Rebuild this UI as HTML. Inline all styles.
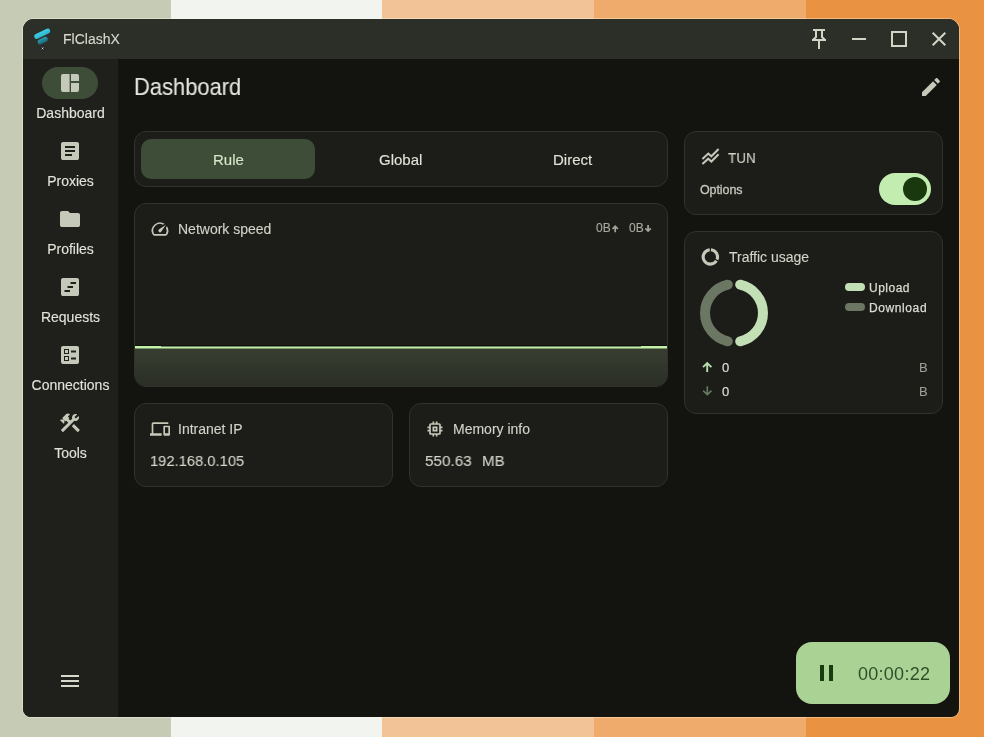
<!DOCTYPE html>
<html><head><meta charset="utf-8">
<style>
*{margin:0;padding:0;box-sizing:border-box}
html,body{width:984px;height:737px;overflow:hidden;font-family:"Liberation Sans",sans-serif}
body{position:relative;background:#c5cbb4}
.s{position:absolute;top:0;height:737px}
.a{position:absolute}
.t{position:absolute;white-space:nowrap;line-height:1;will-change:transform;-webkit-text-stroke:.12px currentColor}
svg{position:absolute;overflow:visible}
#win{position:absolute;left:22px;top:18px;width:938px;height:700px;border-radius:12px 12px 9px 9px;background:rgba(255,255,235,.35);}
#wi{position:absolute;left:23px;top:19px;width:936px;height:698px;border-radius:11px 11px 8px 8px;overflow:hidden;background:#131410}
#tb{position:absolute;left:0;top:0;width:936px;height:40px;background:#2c2e28}
#sb{position:absolute;left:0;top:40px;width:95px;height:658px;background:#1f201c}
.card{position:absolute;background:#1c1d19;border:1px solid #30322c;border-radius:12px}
.nl{color:#e2e3d9;font-size:14px;text-align:center;width:95px;left:23px}
</style></head><body>
<div class="s" style="left:171px;width:211px;background:#f2f4ef"></div>
<div class="s" style="left:382px;width:212px;background:#f2c396"></div>
<div class="s" style="left:594px;width:212px;background:#eeab6c"></div>
<div class="s" style="left:806px;width:178px;background:#e89242"></div>
<div id="win"></div>
<div id="wi">
  <div id="tb"></div>
  <div id="sb"></div>
</div>

<!-- title bar -->
<svg style="left:0;top:0" width="60" height="60" viewBox="0 0 60 60">
  <defs>
    <linearGradient id="lg1" x1="0" y1="0" x2="0" y2="1"><stop offset="0" stop-color="#3bd2ea"/><stop offset="1" stop-color="#2fb2ca"/></linearGradient>
    <linearGradient id="lg2" x1="0" y1="0" x2="0" y2="1"><stop offset="0" stop-color="#2a9fb6"/><stop offset="1" stop-color="#1c6479"/></linearGradient>
  </defs>
  <rect x="33.6" y="31.25" width="17.2" height="5" rx="2.3" fill="url(#lg1)" transform="rotate(-26 42.2 33.75)"/>
  <rect x="37.35" y="38.1" width="10.8" height="5" rx="2.3" fill="url(#lg2)" transform="rotate(-26 42.75 40.6)"/>
  <circle cx="42.6" cy="48.4" r="2" fill="#16222c"/>
  <path d="M41.7 47.5 L43.5 49.3 M43.5 47.5 L41.7 49.3" stroke="#f0f4f6" stroke-width=".8"/>
</svg>
<div class="t" style="left:63px;top:31.8px;font-size:14px;color:#d8d9ce">FlClashX</div>

<svg style="left:806px;top:24px" width="26" height="28" viewBox="0 0 26 28" fill="none" stroke="#d2d5c6" stroke-width="2">
  <path d="M7 6 H19 M10 6 V13 L7 16 M16 6 V13 L19 16 M6 16 H20 M13 16 V25"/>
</svg>
<div class="a" style="left:852px;top:38px;width:14px;height:2px;background:#d2d5c6"></div>
<div class="a" style="left:891px;top:31px;width:16px;height:16px;border:2px solid #d2d5c6"></div>
<svg style="left:932px;top:32px" width="14" height="14" viewBox="0 0 14 14" stroke="#d2d5c6" stroke-width="2">
  <path d="M0.7 0.7 L13.3 13.3 M13.3 0.7 L0.7 13.3"/>
</svg>

<!-- sidebar -->
<div class="a" style="left:42px;top:67px;width:56px;height:32px;border-radius:16px;background:#3e4d38"></div>
<svg style="left:58.3px;top:71px" width="24" height="24" viewBox="0 0 24 24" fill="#c5c9b9"><path d="M5 3H11.6V21H5A2 2 0 0 1 3 19V5A2 2 0 0 1 5 3ZM13 3H19A2 2 0 0 1 21 5V10.1H13ZM13 11.9H21V19A2 2 0 0 1 19 21H13Z"/></svg>
<div class="t nl" style="top:106px">Dashboard</div>

<svg style="left:58px;top:139px" width="24" height="24" viewBox="0 0 24 24" fill="#c5c9b9"><path d="M7 17h7v-2H7Zm0-4h10v-2H7Zm0-4h10V7H7ZM5 21q-.825 0-1.412-.587Q3 19.825 3 19V5q0-.825.588-1.413Q4.175 3 5 3h14q.825 0 1.413.587Q21 4.175 21 5v14q0 .825-.587 1.413Q19.825 21 19 21Z"/></svg>
<div class="t nl" style="top:174px">Proxies</div>

<svg style="left:58px;top:207px" width="24" height="24" viewBox="0 0 24 24" fill="#c5c9b9"><path d="M4 20q-.825 0-1.412-.587Q2 18.825 2 18V6q0-.825.588-1.412Q3.175 4 4 4h6l2 2h8q.825 0 1.413.588Q22 7.175 22 8v10q0 .825-.587 1.413Q20.825 20 20 20Z"/></svg>
<div class="t nl" style="top:242px">Profiles</div>

<svg style="left:58px;top:275px" width="24" height="24" viewBox="0 0 24 24" fill="#c5c9b9"><path fill-rule="evenodd" d="M5 21q-.825 0-1.413-.587Q3 19.825 3 19V5q0-.825.587-1.413Q4.175 3 5 3h14q.825 0 1.413.587Q21 4.175 21 5v14q0 .825-.587 1.413Q19.825 21 19 21Zm7.5-12h5.5V7h-5.5Zm-3 4h5.5v-2H9.5Zm-3 4h5.5v-2H6.5Z"/></svg>
<div class="t nl" style="top:310px">Requests</div>

<svg style="left:58px;top:343px" width="24" height="24" viewBox="0 0 24 24" fill="#c5c9b9"><path d="M13 9.5h5v-2h-5v2zm0 7h5v-2h-5v2zm6 4.5H5c-1.1 0-2-.9-2-2V5c0-1.1.9-2 2-2h14c1.1 0 2 .9 2 2v14c0 1.1-.9 2-2 2zM6 11h5V6H6v5zm1-4h3v3H7V7zM6 18h5v-5H6v5zm1-4h3v3H7v-3z"/></svg>
<div class="t nl" style="top:378px">Connections</div>

<svg style="left:58px;top:411px" width="24" height="24" viewBox="0 0 24 24" fill="#c5c9b9"><path d="M13.783 15.172l2.121-2.121 5.996 5.996-2.121 2.121zM17.5 10c1.93 0 3.5-1.57 3.5-3.5 0-.58-.16-1.12-.41-1.6l-2.7 2.7-1.49-1.49 2.7-2.7c-.48-.25-1.020-.41-1.6-.41C15.57 3 14 4.57 14 6.5c0 .41.08.8.21 1.16l-1.850 1.850-1.780-1.780.71-.71-1.410-1.410L12 3.490c-1.170-1.170-3.070-1.170-4.240 0L4.220 7.030l1.410 1.410H2.810l-.71.71 3.540 3.540.71-.71V9.150l1.410 1.410.71-.71 1.780 1.780-7.410 7.410 2.120 2.120L16.340 9.790c.36.13.75.21 1.160.21z"/></svg>
<div class="t nl" style="top:446px">Tools</div>

<svg style="left:58px;top:669px" width="24" height="24" viewBox="0 0 24 24" fill="#d6d8cb"><path d="M3 18h18v-2H3v2zm0-5h18v-2H3v2zm0-7v2h18V6H3z"/></svg>

<!-- header -->
<div class="t" style="left:134px;top:75.5px;font-size:23.2px;color:#e4e5dc;transform:scaleX(.945);transform-origin:0 0">Dashboard</div>
<svg style="left:919px;top:75px" width="24" height="24" viewBox="0 0 24 24" fill="#c5c9b9"><path d="M3 17.25V21h3.75L17.81 9.94l-3.75-3.75L3 17.25zM20.71 7.04c.39-.39.39-1.02 0-1.41l-2.34-2.34c-.39-.39-1.02-.39-1.41 0l-1.83 1.83 3.75 3.75 1.83-1.830z"/></svg>

<!-- mode card -->
<div class="card" style="left:134px;top:131px;width:534px;height:56px"></div>
<div class="a" style="left:141px;top:139px;width:174px;height:40px;border-radius:10px;background:#3e4d38"></div>
<div class="t" style="left:213px;top:152px;font-size:15px;color:#d5e8c9">Rule</div>
<div class="t" style="left:379px;top:152px;font-size:15px;color:#e2e3d9">Global</div>
<div class="t" style="left:553px;top:152px;font-size:15px;color:#e2e3d9">Direct</div>

<!-- network speed -->
<div class="card" style="left:134px;top:203px;width:534px;height:184px;overflow:hidden">
  <div class="a" style="left:0;top:143px;width:532px;height:40px;background:linear-gradient(#383f31,#2a2e26)"></div>
  <div class="a" style="left:0;top:141px;width:532px;height:1px;background:#10110d"></div>
  <svg style="left:0;top:0" width="532" height="183" viewBox="0 0 532 183"><path d="M0 142H26V142.6H506V142H532V144.6H0Z" fill="#c2f2a8"/></svg>
</div>
<svg style="left:150px;top:219px" width="20" height="20" viewBox="0 0 24 24" fill="#c5c9b9"><path d="M20.38 8.57l-1.23 1.85a8 8 0 0 1-.22 7.58H5.07A8 8 0 0 1 15.58 6.85l1.85-1.23A10 10 0 0 0 3.35 19a2 2 0 0 0 1.72 1h13.85a2 2 0 0 0 1.74-1 10 10 0 0 0-.27-10.44zm-9.79 6.84a2 2 0 0 0 2.83 0l5.66-8.49-8.49 5.66a2 2 0 0 0 0 2.83z"/></svg>
<div class="t" style="left:178px;top:222px;font-size:14px;color:#d2d4c7">Network speed</div>
<div class="t" style="left:596px;top:222px;font-size:12px;color:#a8aa9e">0B</div>
<div class="t" style="left:629px;top:222px;font-size:12px;color:#a8aa9e">0B</div>
<svg style="left:0;top:0" width="984" height="737" viewBox="0 0 984 737" fill="none" stroke="#a3a599" stroke-width="1.7">
  <path d="M615.2 232.2 V226.3 M612.5 229 L615.2 226.3 L617.9 229"/>
  <path d="M648.1 225 V231 M645.4 228.3 L648.1 231 L650.8 228.3"/>
</svg>

<!-- intranet -->
<div class="card" style="left:134px;top:403px;width:259px;height:84px"></div>
<svg style="left:150px;top:419px" width="20" height="20" viewBox="0 0 24 24" fill="#c5c9b9"><path d="M4 6h18V4H4c-1.1 0-2 .9-2 2v11H0v3h14v-3H4V6zm19 2h-6c-.55 0-1 .45-1 1v10c0 .55.45 1 1 1h6c.55 0 1-.45 1-1V9c0-.55-.45-1-1-1zm-1 9h-4v-7h4v7z"/></svg>
<div class="t" style="left:178px;top:422px;font-size:14px;color:#d2d4c7">Intranet IP</div>
<div class="t" style="left:149.7px;top:453.1px;font-size:15.5px;color:#d2d4c7;transform:scaleX(.95);transform-origin:0 0">192.168.0.105</div>

<!-- memory -->
<div class="card" style="left:409px;top:403px;width:259px;height:84px"></div>
<svg style="left:424.5px;top:418.5px" width="20" height="20" viewBox="0 0 24 24" fill="#c5c9b9"><path d="M15 9H9v6h6V9zm-2 4h-2v-2h2v2zm8-2V9h-2V7c0-1.1-.9-2-2-2h-2V3h-2v2h-2V3H9v2H7c-1.1 0-2 .9-2 2v2H3v2h2v2H3v2h2v2c0 1.1.9 2 2 2h2v2h2v-2h2v2h2v-2h2c1.1 0 2-.9 2-2v-2h2v-2h-2v-2h2zm-4 6H7V7h10v10z"/></svg>
<div class="t" style="left:453px;top:422px;font-size:14px;color:#d2d4c7">Memory info</div>
<div class="t" style="left:424.8px;top:453.1px;font-size:15.5px;color:#d2d4c7;transform:scaleX(.985);transform-origin:0 0">550.63</div>
<div class="t" style="left:481.8px;top:453.1px;font-size:15.5px;color:#d2d4c7;transform:scaleX(.97);transform-origin:0 0">MB</div>

<!-- TUN -->
<div class="card" style="left:684px;top:131px;width:259px;height:84px"></div>
<svg style="left:0;top:0" width="984" height="737" viewBox="0 0 984 737" fill="none" stroke="#c5c9b9" stroke-width="2" stroke-linejoin="miter">
  <path d="M702.4 158.9 L708.26 153.5 L711.36 156.3 L718.6 149"/>
  <path d="M702.4 164.1 L708.26 158.7 L711.36 161.5 L718.6 154.2"/>
</svg>
<div class="t" style="left:728px;top:149.5px;font-size:15px;color:#d2d4c7;transform:scaleX(.9);transform-origin:0 0">TUN</div>
<div class="t" style="left:700.3px;top:184.3px;font-size:12.5px;color:#c8cabd;-webkit-text-stroke:.28px #c8cabd;letter-spacing:-.1px">Options</div>
<div class="a" style="left:879px;top:173px;width:52px;height:32px;border-radius:16px;background:#c3ecb0"></div>
<div class="a" style="left:903px;top:177px;width:24px;height:24px;border-radius:12px;background:#1a380e"></div>

<!-- traffic -->
<div class="card" style="left:684px;top:231px;width:259px;height:183px"></div>
<svg style="left:0;top:0" width="984" height="737" viewBox="0 0 984 737" fill="none" stroke="#c5c9b9" stroke-width="3.1">
  <path d="M710.97 249.83 A7.15 7.15 0 0 1 716.96 259.69"/><path d="M716.41 260.74 A7.15 7.15 0 1 1 709.73 249.83"/>
</svg>
<div class="t" style="left:729px;top:250px;font-size:14px;color:#d2d4c7">Traffic usage</div>
<svg style="left:700px;top:279px" width="68" height="68" viewBox="0 0 68 68" fill="none" stroke-width="10" stroke-linecap="round">
  <path d="M40.18 5.67 A29 29 0 0 1 40.18 62.33" stroke="#c3dfb5"/>
  <path d="M27.82 62.33 A29 29 0 0 1 27.82 5.67" stroke="#6b7762"/>
</svg>
<div class="a" style="left:845px;top:283px;width:20px;height:8px;border-radius:4px;background:#c3dfb5"></div>
<div class="a" style="left:845px;top:303px;width:20px;height:8px;border-radius:4px;background:#6b7762"></div>
<div class="t" style="left:869px;top:282px;font-size:12px;color:#dcddd2;-webkit-text-stroke:.25px #dcddd2;letter-spacing:.5px">Upload</div>
<div class="t" style="left:869px;top:302px;font-size:12px;color:#dcddd2;-webkit-text-stroke:.25px #dcddd2;letter-spacing:.6px">Download</div>

<svg style="left:0;top:0" width="984" height="737" viewBox="0 0 984 737" fill="none" stroke="#b9dcaa" stroke-width="1.9">
  <path d="M707.2 372 V363.2 M703 367.2 L707.2 363 L711.4 367.2"/>
</svg>
<div class="t" style="left:722px;top:361px;font-size:13px;color:#dfe0d6">0</div>
<div class="t" style="left:919px;top:361px;font-size:13px;color:#9c9e93">B</div>
<svg style="left:0;top:0" width="984" height="737" viewBox="0 0 984 737" fill="none" stroke="#6b7a64" stroke-width="1.6">
  <path d="M707.3 386.2 V394.6 M703.2 390.6 L707.3 394.7 L711.4 390.6"/>
</svg>
<div class="t" style="left:722px;top:385px;font-size:13px;color:#dfe0d6">0</div>
<div class="t" style="left:919px;top:385px;font-size:13px;color:#9c9e93">B</div>

<!-- fab -->
<div class="a" style="left:796px;top:642px;width:154px;height:62px;border-radius:16px;background:#abd295"></div>
<div class="a" style="left:819.7px;top:665px;width:4.3px;height:16px;background:#1b3a12"></div>
<div class="a" style="left:828.6px;top:665px;width:4.4px;height:16px;background:#1b3a12"></div>
<div class="t" style="left:857.6px;top:664.8px;font-size:18px;color:#30502a;-webkit-text-stroke:0;letter-spacing:.27px">00:00:22</div>
</body></html>
